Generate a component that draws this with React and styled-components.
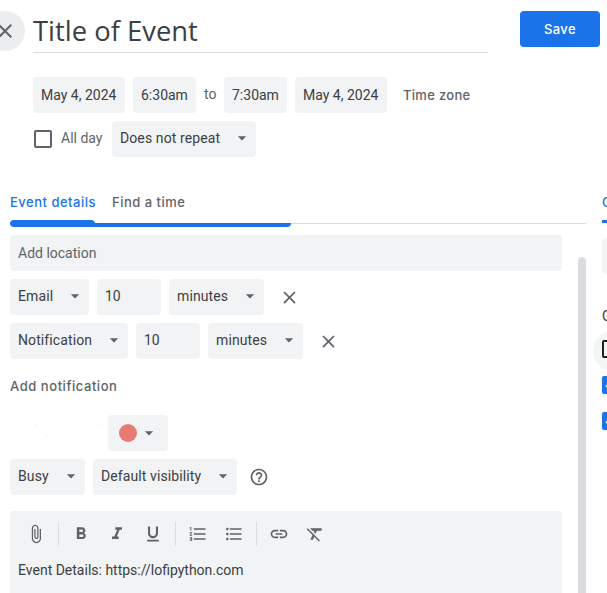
import React from 'react';
import styled, { createGlobalStyle } from 'styled-components';
import {
  MdArrowDropDown,
  MdAttachFile,
  MdCheck,
  MdClose,
  MdFormatBold,
  MdFormatClear,
  MdFormatItalic,
  MdFormatListBulleted,
  MdFormatListNumbered,
  MdFormatUnderlined,
  MdHelpOutline,
  MdLink,
} from 'react-icons/md';

const GlobalStyle = createGlobalStyle`
  html, body {
    margin: 0;
    background: #fff;
    overflow: hidden;
  }
  * {
    box-sizing: border-box;
  }
`;

const titleFont = `"Open Sans", "Liberation Sans", sans-serif`;
const labelFont = `Inter, "Liberation Sans", sans-serif`;
const fieldFont = `Roboto, "Liberation Sans", sans-serif`;

const Page = styled.div`
  width: 607px;
  height: 593px;
  overflow: hidden;
  font-family: ${fieldFont};
  font-size: 14px;
  color: #3c4043;
`;

const Header = styled.header`
  display: flex;
  align-items: flex-start;
  padding-top: 11px;
`;

const CloseCircle = styled.button`
  flex: none;
  width: 40px;
  height: 40px;
  margin: 0 8px 0 -15px;
  padding: 0;
  display: flex;
  align-items: center;
  justify-content: center;
  border: none;
  border-radius: 50%;
  background: #ecedee;
  color: #5f6368;
  font-size: 24px;
`;

const TitleField = styled.div`
  flex: none;
  width: 455px;
  height: 42px;
  border-bottom: 1px solid #dadce0;
  font-family: ${titleFont};
  font-size: 27.4px;
  line-height: 40px;
  color: #3c4043;
`;

const SaveButton = styled.button`
  flex: none;
  width: 80px;
  height: 36px;
  margin-left: 32px;
  border: none;
  border-radius: 4px;
  background: #1a73e8;
  color: #fff;
  font-family: ${labelFont};
  font-size: 13px;
  font-weight: 500;
  letter-spacing: 0.4px;
`;

const When = styled.section`
  margin-top: 24px;
  padding-left: 33px;
  display: flex;
  flex-direction: column;
  gap: 8px;
`;

const Row = styled.div`
  display: flex;
  align-items: center;
  gap: 8px;
`;

const Field = styled.div`
  flex: none;
  width: ${(p) => p.$w}px;
  height: 36px;
  display: flex;
  align-items: center;
  justify-content: space-between;
  padding: 0 ${(p) => (p.$caret ? 4 : 8)}px ${(p) => (p.$caret || p.$raised ? 2 : 0)}px 8px;
  border-radius: 4px;
  background: #f1f3f4;
  letter-spacing: ${(p) => (p.$caret ? '0.1px' : '0')};
  white-space: nowrap;
  svg {
    flex: none;
    font-size: 20px;
    color: #5f6368;
  }
`;

const ToLabel = styled.span`
  width: 12px;
  padding-bottom: 2px;
  text-align: center;
  font-size: 14px;
  color: #5f6368;
`;

const TimeZone = styled.span`
  margin-left: 8px;
  font-family: ${labelFont};
  font-size: 13px;
  font-weight: 500;
  letter-spacing: 0.3px;
  color: #5f6368;
`;

const CheckBox = styled.span`
  flex: none;
  width: 18px;
  height: 18px;
  margin-left: 1px;
  border: 2px solid #5f6368;
  border-radius: 2px;
`;

const AllDay = styled.span`
  flex: none;
  width: 43px;
  margin-left: 1px;
  padding-bottom: 2px;
  color: #5f6368;
  white-space: nowrap;
`;

const Columns = styled.div`
  display: flex;
  margin-top: 24px;
  padding-left: 10px;
`;

const MainColumn = styled.div`
  flex: none;
  width: 576px;
`;

const SideColumn = styled.div`
  flex: none;
  width: 200px;
  margin-left: 16px;
`;

const Tabs = styled.nav`
  position: relative;
  height: 43px;
  display: flex;
  gap: 17px;
  border-bottom: 1px solid #dadce0;
`;

const Tab = styled.span`
  padding-top: 13px;
  width: ${(p) => p.$w}px;
  font-family: ${labelFont};
  font-size: 13px;
  font-weight: 500;
  letter-spacing: 0.5px;
  line-height: 16px;
  white-space: nowrap;
  color: ${(p) => (p.$active ? '#1a73e8' : '#5f6368')};
`;

const TabLine = styled.span`
  position: absolute;
  left: 0;
  top: 42px;
  width: 281px;
  height: 4px;
  border-radius: 0 0 4px 4px;
  background: #1a73e8;
`;

const TabLineActive = styled.span`
  position: absolute;
  left: 0;
  top: 39px;
  width: 85px;
  height: 4px;
  border-radius: 4px 4px 0 0;
  background: #1a73e8;
`;

const Details = styled.div`
  display: flex;
  align-items: flex-start;
`;

const Form = styled.div`
  flex: none;
  width: 552px;
  margin-top: 11px;
  display: flex;
  flex-direction: column;
  gap: 8px;
`;

const Scrollbar = styled.div`
  flex: none;
  width: 8px;
  height: 340px;
  margin: 33px 0 0 16px;
  border-radius: 4px 4px 0 0;
  background: #dadce0;
`;

const LocationField = styled.div`
  height: 36px;
  padding: 0 8px;
  display: flex;
  align-items: center;
  border-radius: 4px;
  background: #f1f3f4;
  color: #5f6368;
`;

const RemoveIcon = styled(MdClose)`
  flex: none;
  margin-left: 7px;
  font-size: 21px;
  color: #5f6368;
`;

const AddNotification = styled.div`
  height: 40px;
  padding-top: 11px;
  font-family: ${labelFont};
  font-size: 13px;
  font-weight: 500;
  letter-spacing: 0.55px;
  line-height: 16px;
  color: #5f6368;
`;

const ColorRow = styled.div`
  display: flex;
  align-items: center;
`;

const Specks = styled.svg`
  flex: none;
  width: 98px;
  height: 36px;
`;

const ColorPicker = styled.div`
  flex: none;
  width: 60px;
  height: 36px;
  display: flex;
  align-items: center;
  padding-left: 11px;
  border-radius: 4px;
  background: #f1f3f4;
  svg {
    font-size: 20px;
    color: #5f6368;
    margin-left: 2px;
  }
`;

const ColorDot = styled.span`
  flex: none;
  width: 18px;
  height: 18px;
  border-radius: 50%;
  background: #e67c73;
`;

const HelpIcon = styled(MdHelpOutline)`
  flex: none;
  margin-left: 4px;
  font-size: 20px;
  color: #5f6368;
`;

const Editor = styled.div`
  margin-top: 8px;
  height: 120px;
  padding: 0 8px;
  border-radius: 4px 4px 0 0;
  background: #f1f3f4;
`;

const Toolbar = styled.div`
  height: 46px;
  display: flex;
  align-items: center;
  color: #5f6368;
`;

const ToolIcon = styled.span`
  flex: none;
  width: 36px;
  display: flex;
  justify-content: center;
  font-size: 20px;
`;

const ToolDivider = styled.span`
  flex: none;
  width: 1px;
  height: 24px;
  margin: 0 4px;
  background: #dadce0;
`;

const EditorText = styled.div`
  margin-top: 3px;
  line-height: 20px;
`;

const SideTab = styled.div`
  height: 43px;
  padding-top: 13px;
  font-family: ${labelFont};
  font-size: 13px;
  font-weight: 500;
  letter-spacing: 0.5px;
  line-height: 16px;
  color: #1a73e8;
  position: relative;
  &::after {
    content: '';
    position: absolute;
    left: 0;
    top: 39px;
    width: 60px;
    height: 3px;
    background: #1a73e8;
  }
`;

const GuestInput = styled.div`
  height: 36px;
  margin-top: 14px;
  border-radius: 4px;
  background: #f1f3f4;
`;

const SideLabel = styled.div`
  margin-top: 32px;
  font-size: 14px;
  line-height: 20px;
  color: #3c4043;
`;

const PermissionList = styled.div`
  isolation: isolate;
  margin-top: 14px;
  display: flex;
  flex-direction: column;
  gap: 18px;
`;

const Permission = styled.span`
  position: relative;
  width: 18px;
  height: 18px;
  display: flex;
  align-items: center;
  justify-content: center;
  border-radius: 2px;
  border: ${(p) => (p.$checked ? 'none' : '2px solid #202124')};
  background: ${(p) => (p.$checked ? '#1a73e8' : 'transparent')};
  color: #fff;
  font-size: 16px;
  ${(p) =>
    p.$hover &&
    `&::before {
      content: '';
      position: absolute;
      z-index: -1;
      left: -11px;
      top: -11px;
      width: 40px;
      height: 40px;
      border-radius: 50%;
      background: #f4f5f5;
    }`}
`;

const SelectField = ({ w, children }) => (
  <Field $w={w} $caret>
    {children}
    <MdArrowDropDown />
  </Field>
);

const App = () => (
  <Page>
    <GlobalStyle />
    <Header>
      <CloseCircle aria-label="Close">
        <MdClose />
      </CloseCircle>
      <TitleField>Title of Event</TitleField>
      <SaveButton>Save</SaveButton>
    </Header>

    <When>
      <Row>
        <Field $w={92}>May 4, 2024</Field>
        <Field $w={63}>6:30am</Field>
        <ToLabel>to</ToLabel>
        <Field $w={63}>7:30am</Field>
        <Field $w={92}>May 4, 2024</Field>
        <TimeZone>Time zone</TimeZone>
      </Row>
      <Row>
        <CheckBox />
        <AllDay>All day</AllDay>
        <SelectField w={144}>Does not repeat</SelectField>
      </Row>
    </When>

    <Columns>
      <MainColumn>
        <Tabs>
          <Tab $active $w={85}>Event details</Tab>
          <Tab>Find a time</Tab>
          <TabLine />
          <TabLineActive />
        </Tabs>
        <Details>
          <Form>
            <LocationField>Add location</LocationField>
            <Row>
              <SelectField w={79}>Email</SelectField>
              <Field $w={64} $raised>10</Field>
              <SelectField w={95}>minutes</SelectField>
              <RemoveIcon />
            </Row>
            <Row>
              <SelectField w={118}>Notification</SelectField>
              <Field $w={64} $raised>10</Field>
              <SelectField w={95}>minutes</SelectField>
              <RemoveIcon />
            </Row>
            <AddNotification>Add notification</AddNotification>
            <ColorRow>
              {/* faint leftovers where the calendar name was blanked out */}
              <Specks viewBox="0 0 98 36">
                <rect x="25" y="10" width="1" height="1" fill="#e4e4e4" />
                <rect x="36" y="21" width="1" height="1" fill="#e4e4e4" />
                <rect x="66" y="22" width="1" height="1" fill="#eeeeee" />
                <rect x="88" y="10" width="1" height="1" fill="#e4e4e4" />
              </Specks>
              <ColorPicker>
                <ColorDot />
                <MdArrowDropDown />
              </ColorPicker>
            </ColorRow>
            <Row>
              <SelectField w={75}>Busy</SelectField>
              <SelectField w={144}>Default visibility</SelectField>
              <HelpIcon />
            </Row>
            <Editor>
              <Toolbar>
                <ToolIcon><MdAttachFile /></ToolIcon>
                <ToolDivider />
                <ToolIcon><MdFormatBold /></ToolIcon>
                <ToolIcon><MdFormatItalic /></ToolIcon>
                <ToolIcon><MdFormatUnderlined /></ToolIcon>
                <ToolDivider />
                <ToolIcon><MdFormatListNumbered /></ToolIcon>
                <ToolIcon><MdFormatListBulleted /></ToolIcon>
                <ToolDivider />
                <ToolIcon><MdLink /></ToolIcon>
                <ToolIcon><MdFormatClear /></ToolIcon>
              </Toolbar>
              <EditorText>Event Details: https://lofipython.com</EditorText>
            </Editor>
          </Form>
          <Scrollbar />
        </Details>
      </MainColumn>

      <SideColumn>
        <SideTab>Guests</SideTab>
        <GuestInput />
        <SideLabel>Guest permissions</SideLabel>
        <PermissionList>
          <Permission $hover />
          <Permission $checked><MdCheck /></Permission>
          <Permission $checked><MdCheck /></Permission>
        </PermissionList>
      </SideColumn>
    </Columns>
  </Page>
);

export default App;
